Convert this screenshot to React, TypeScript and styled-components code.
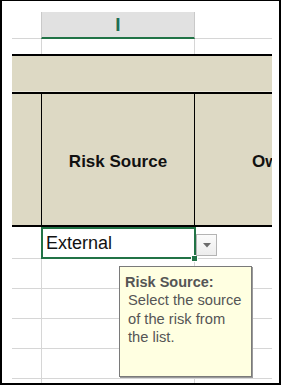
import React from "react";
import styled, { createGlobalStyle } from "styled-components";

const Global = createGlobalStyle`
  html, body { margin: 0; padding: 0; background: #fff; }
  * { box-sizing: border-box; }
`;

const GREEN = "#217346";
const GRID = "#d6d6d6";
const TAN = "#ddd9c4";

const Frame = styled.div`
  width: 281px;
  height: 385px;
  border-style: solid;
  border-color: #000;
  border-width: 1px 2px 2px 2px;
  padding: 11px 7px 0 10px;
  background: #fff;
  overflow: hidden;
`;

const Sheet = styled.div`
  position: relative;
  width: 260px;
  height: 371px;
  overflow: hidden;
  display: flex;
  flex-direction: column;
  font-family: "Liberation Sans", Arial, sans-serif;
  color: #000;
`;

const Row = styled.div<{ $h: number; $bg?: string; $line?: string }>`
  flex: none;
  display: flex;
  height: ${(p) => p.$h}px;
  background: ${(p) => p.$bg ?? "transparent"};
  border-bottom: ${(p) => (p.$line ? `1px solid ${p.$line}` : "none")};
`;

const Rule = styled.div<{ $h: number; $c?: string }>`
  flex: none;
  height: ${(p) => p.$h}px;
  background: ${(p) => p.$c ?? "#000"};
`;

const Cell = styled.div<{ $w?: number; $edge?: string; $align?: string }>`
  flex: ${(p) => (p.$w ? "none" : "1 0 auto")};
  width: ${(p) => (p.$w ? `${p.$w}px` : "auto")};
  border-right: ${(p) => (p.$edge ? `1px solid ${p.$edge}` : "none")};
  display: flex;
  align-items: center;
  justify-content: ${(p) => p.$align ?? "center"};
  white-space: nowrap;
  overflow: visible;
`;

const Corner = styled.div<{ $w?: number }>`
  flex: ${(p) => (p.$w ? "none" : "1 0 auto")};
  width: ${(p) => (p.$w ? `${p.$w}px` : "auto")};
  border-bottom: 1px solid ${GRID};
`;

const ColHead = styled.div`
  flex: none;
  width: 154px;
  background: #e1e1e1;
  border-left: 1px solid #c9c9c9;
  border-right: 1px solid #c9c9c9;
  border-bottom: 2px solid ${GREEN};
  display: flex;
  align-items: center;
  justify-content: center;
  font-family: "Liberation Sans", Arial, sans-serif;
  font-size: 19px;
  font-weight: bold;
  color: #1f6f52;
  padding-top: 1px;
`;

const HeadText = styled.span`
  font-weight: bold;
  font-size: 17px;
  color: #111;
  padding-top: 5px;
`;

const WideHead = styled.div`
  flex: none;
  width: 167px;
  display: flex;
  align-items: center;
  justify-content: center;
`;

const Value = styled.span`
  font-size: 18px;
  padding-left: 4px;
  padding-top: 2px;
  color: #111;
`;

const Selection = styled.div`
  position: absolute;
  left: 29px;
  top: 215px;
  width: 155px;
  height: 32px;
  border: 2px solid ${GREEN};
  pointer-events: none;
`;

const Handle = styled.div`
  position: absolute;
  left: 179px;
  top: 243px;
  width: 7px;
  height: 7px;
  background: ${GREEN};
  border: 1px solid #fff;
`;

const DropButton = styled.div`
  position: absolute;
  left: 184px;
  top: 222px;
  width: 21px;
  height: 22px;
  border: 1px solid #b4b4b4;
  background: linear-gradient(#fbfbfb, #ededed);
  display: flex;
  align-items: center;
  justify-content: center;
`;

const Tip = styled.div`
  position: absolute;
  left: 107px;
  top: 254px;
  width: 133px;
  height: 111px;
  background: #ffffe1;
  border: 1px solid #7a7a7a;
  box-shadow: 1px 1px 0 #9a9a9a;
  padding: 6px 4px 0 5px;
  color: #555;
  font-family: "Liberation Sans", Arial, sans-serif;
  line-height: 18.3px;
`;

const TipTitle = styled.div`
  font-weight: bold;
  font-size: 14.5px;
`;

const TipBody = styled.div`
  font-size: 14.7px;
  padding-left: 3px;
`;

type DataProps = { h: number; children?: React.ReactNode };
const DataRow = ({ h, children }: DataProps) => (
  <Row $h={h} $line={GRID}>
    <Cell $w={30} $edge={GRID} />
    <Cell $w={153} $edge={GRID} $align="flex-start">
      {children}
    </Cell>
    <Cell />
  </Row>
);

export default function App() {
  return (
    <>
      <Global />
      <Frame>
        <Sheet>
          <Row $h={27}>
            <Corner $w={29} />
            <ColHead>I</ColHead>
            <Corner />
          </Row>
          <Row $h={15}>
            <Cell $w={30} $edge={GRID} />
            <Cell $w={153} $edge={GRID} />
            <Cell />
          </Row>
          <Rule $h={2} />
          <Row $h={35} $bg={TAN} />
          <Rule $h={1} $c="#ebe8dc" />
          <Rule $h={2} />
          <Row $h={131} $bg={TAN}>
            <Cell $w={30} $edge="#000" />
            <Cell $w={153} $edge="#000">
              <HeadText>Risk Source</HeadText>
            </Cell>
            <WideHead>
              <HeadText>Owner</HeadText>
            </WideHead>
          </Row>
          <Rule $h={2} />
          <DataRow h={32}>
            <Value>External</Value>
          </DataRow>
          <DataRow h={30} />
          <DataRow h={30} />
          <DataRow h={30} />
          <DataRow h={30} />
          <DataRow h={30} />
          <Selection />
          <Handle />
          <DropButton>
            <svg width="8" height="5" viewBox="0 0 8 5">
              <path d="M0 0 H8 L4 4.5 Z" fill="#6b6b6b" />
            </svg>
          </DropButton>
          <Tip>
            <TipTitle>Risk Source:</TipTitle>
            <TipBody>
              Select the source
              <br />
              of the risk from
              <br />
              the list.
            </TipBody>
          </Tip>
        </Sheet>
      </Frame>
    </>
  );
}
